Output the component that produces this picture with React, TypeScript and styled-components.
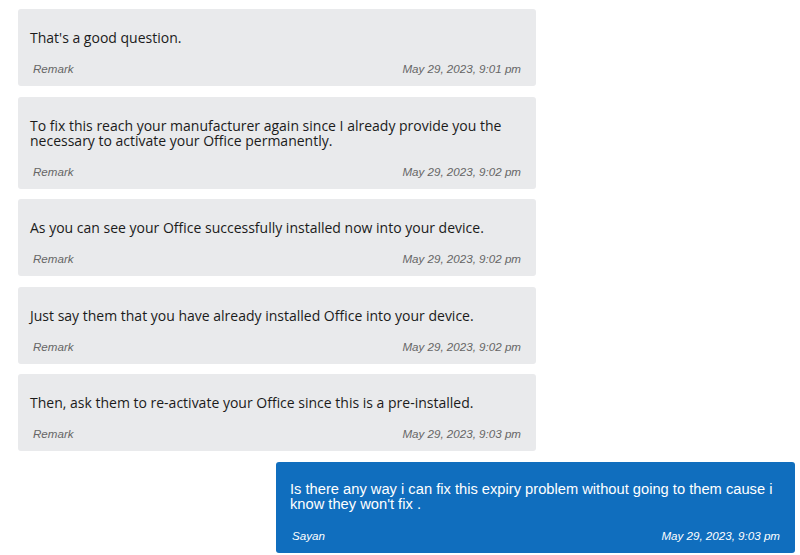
import React from "react";
import styled, { createGlobalStyle } from "styled-components";

const Global = createGlobalStyle`
  html, body { margin: 0; padding: 0; background: #ffffff; }
  body { font-family: "Liberation Sans", Arial, sans-serif; }
`;

const Thread = styled.div`
  display: flex;
  flex-direction: column;
  gap: 10.6px;
  padding: 9px 5px 0 18px;
`;

const Bubble = styled.div<{ $mine?: boolean }>`
  width: ${(p) => (p.$mine ? "519px" : "518px")};
  align-self: ${(p) => (p.$mine ? "flex-end" : "flex-start")};
  box-sizing: border-box;
  border-radius: 3px;
  background: ${(p) => (p.$mine ? "#106ebe" : "#e9eaec")};
  color: ${(p) => (p.$mine ? "#ffffff" : "#1b1b1b")};
  padding: ${(p) => (p.$mine ? "20px 15px 10px 14px" : "21px 15px 10px 12px")};
  display: flex;
  flex-direction: column;
  gap: 17px;
`;

const Body = styled.div<{ $mine?: boolean }>`
  font-family: ${(p) =>
    p.$mine ? `"Liberation Sans", Arial, sans-serif` : `"Open Sans", "Segoe UI", sans-serif`};
  font-size: ${(p) => (p.$mine ? "14.7px" : "14px")};
  line-height: 15px;
  white-space: pre-line;
`;

const Meta = styled.div<{ $mine?: boolean }>`
  display: flex;
  justify-content: space-between;
  font-family: "Liberation Sans", Arial, sans-serif;
  font-style: italic;
  font-size: 11.6px;
  line-height: 14px;
  color: ${(p) => (p.$mine ? "#ffffff" : "#666666")};
  padding-left: ${(p) => (p.$mine ? "2px" : "3px")};
`;

type Msg = { text: string; who: string; time: string; mine?: boolean };

const messages: Msg[] = [
  { text: "That's a good question.", who: "Remark", time: "May 29, 2023, 9:01 pm" },
  {
    text: "To fix this reach your manufacturer again since I already provide you the\nnecessary to activate your Office permanently.",
    who: "Remark",
    time: "May 29, 2023, 9:02 pm",
  },
  {
    text: "As you can see your Office successfully installed now into your device.",
    who: "Remark",
    time: "May 29, 2023, 9:02 pm",
  },
  {
    text: "Just say them that you have already installed Office into your device.",
    who: "Remark",
    time: "May 29, 2023, 9:02 pm",
  },
  {
    text: "Then, ask them to re-activate your Office since this is a pre-installed.",
    who: "Remark",
    time: "May 29, 2023, 9:03 pm",
  },
  {
    text: "Is there any way i can fix this expiry problem without going to them cause i\nknow they won't fix .",
    who: "Sayan",
    time: "May 29, 2023, 9:03 pm",
    mine: true,
  },
];

export default function App() {
  return (
    <>
      <Global />
      <Thread>
        {messages.map((m, i) => (
          <Bubble key={i} $mine={m.mine}>
            <Body $mine={m.mine}>{m.text}</Body>
            <Meta $mine={m.mine}>
              <span>{m.who}</span>
              <span>{m.time}</span>
            </Meta>
          </Bubble>
        ))}
      </Thread>
    </>
  );
}
